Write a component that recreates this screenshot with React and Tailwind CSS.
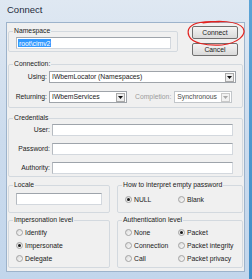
import React from 'react'

const GroupBox = ({ label, className, children }) => (
  <fieldset className={`border border-[#d3d9df] rounded-[2px] shrink-0 ${className}`}>
    <legend className="ml-[4px] px-[1px] leading-[10px] text-[#1b1b1b]">{label}</legend>
    {children}
  </fieldset>
)

const TextBox = ({ className, children }) => (
  <div className={`h-[12px] bg-white border border-[#d3d8de] border-t-[#9ea4ab] border-l-[#b5bac0] flex items-stretch ${className}`}>
    {children}
  </div>
)

const Arrow = ({ disabled }) => (
  <span className={`w-[9px] h-[9px] mr-[1px] flex items-center justify-center border ${disabled ? 'border-[#c9c9c9] bg-[#f2f2f2]' : 'border-[#a9a9a9] bg-[#ededed]'}`}>
    <svg width="5" height="3" viewBox="0 0 5 3">
      <path d="M0 0 H5 L2.5 3 Z" fill={disabled ? '#a8a8a8' : '#111'} />
    </svg>
  </span>
)

const Combo = ({ text, disabled, className }) => (
  <div className={`h-[12px] flex items-center bg-white border ${disabled ? 'border-[#c2c6ca] text-[#4a4a4a]' : 'border-[#9fa4aa] text-[#1b1b1b]'} pl-[2px] ${className}`}>
    <span className="flex-1 leading-[10px] whitespace-nowrap overflow-hidden">{text}</span>
    <Arrow disabled={disabled} />
  </div>
)

const Radio = ({ label, checked }) => (
  <div className="flex items-center gap-[2px] h-[13px] whitespace-nowrap">
    <span className="w-[7px] h-[7px] rounded-full border border-[#a3a3a3] bg-gradient-to-br from-[#dadada] to-[#fbfbfb] flex items-center justify-center">
      {checked && <span className="w-[3px] h-[3px] rounded-full bg-[#1a1a1a]" />}
    </span>
    <span className="leading-[10px]">{label}</span>
  </div>
)

const Button = ({ children, className }) => (
  <div className={`h-[13px] border border-[#707070] rounded-[2px] bg-gradient-to-b from-[#f4f4f4] to-[#dadada] text-center leading-[11px] text-[#1b1b1b] ${className}`}>
    {children}
  </div>
)

export default function App() {
  return (
    <div className="w-[252px] h-[279px] relative overflow-hidden flex font-['Liberation_Sans',Arial,sans-serif] text-[6.8px] text-[#1b1b1b]">
      <div className="w-[249px] h-[279px] flex flex-col pl-[6px] pr-[4px] bg-gradient-to-b from-[#dfe8f2] via-[#cbdbed] to-[#c2d6ec]">
        <div className="h-[22px] pl-[1px] pt-[4px] text-[9.5px] leading-[12px] text-[#1e2b3c]">Connect</div>

        <div className="h-[250px] w-[239px] bg-[#f0f0f0] border border-[#9db3cb] px-[1px] flex flex-col">
          {/* namespace + buttons */}
          <div className="h-[36px] flex items-start">
            <GroupBox label="Namespace" className="w-[170px] h-[26px] mt-[3px]">
              <TextBox className="ml-[7px] w-[155px] mt-[1px] p-[1px]">
                <span className="bg-[#3399ff] text-white leading-[9px] px-[1px]">root\cimv2</span>
              </TextBox>
            </GroupBox>
            <div className="ml-auto mr-[5px] mt-[3px] w-[46px] flex flex-col gap-[4px]">
              <Button>Connect</Button>
              <Button>Cancel</Button>
            </div>
          </div>

          {/* connection */}
          <GroupBox label="Connection:" className="w-[235px] h-[49px]">
            <div className="flex items-center mt-[2px]">
              <span className="w-[38px] text-right">Using:</span>
              <Combo text="IWbemLocator (Namespaces)" className="ml-[2px] w-[187px]" />
            </div>
            <div className="flex items-center mt-[8px]">
              <span className="w-[38px] text-right">Returning:</span>
              <Combo text="IWbemServices" className="ml-[2px] w-[78px]" />
              <span className="ml-[8px] text-[#9c9c9c]">Completion:</span>
              <Combo text="Synchronous" disabled className="ml-[3px] w-[58px]" />
            </div>
          </GroupBox>

          {/* credentials */}
          <GroupBox label="Credentials" className="w-[235px] h-[64px] mt-[5px]">
            <div className="flex items-center mt-[1px]">
              <span className="w-[41px] text-right">User:</span>
              <TextBox className="ml-[2px] w-[181px]" />
            </div>
            <div className="flex items-center mt-[7px]">
              <span className="w-[41px] text-right">Password:</span>
              <TextBox className="ml-[2px] w-[181px]" />
            </div>
            <div className="flex items-center mt-[7px]">
              <span className="w-[41px] text-right">Authority:</span>
              <TextBox className="ml-[2px] w-[181px]" />
            </div>
          </GroupBox>

          {/* locale + empty password */}
          <div className="flex mt-[3px] h-[33px]">
            <GroupBox label="Locale" className="w-[102px] h-[33px]">
              <TextBox className="ml-[7px] mt-[3px] w-[86px]" />
            </GroupBox>
            <GroupBox label="How to interpret empty password" className="w-[126px] h-[33px] ml-[7px]">
              <div className="grid grid-cols-[53px_1fr] ml-[7px] mt-[3px]">
                <Radio label="NULL" checked />
                <Radio label="Blank" />
              </div>
            </GroupBox>
          </div>

          {/* impersonation + authentication */}
          <div className="flex mt-[2px] h-[53px]">
            <GroupBox label="Impersonation level" className="w-[102px] h-[53px]">
              <div className="ml-[7px] mt-[1px] flex flex-col">
                <Radio label="Identify" />
                <Radio label="Impersonate" checked />
                <Radio label="Delegate" />
              </div>
            </GroupBox>
            <GroupBox label="Authentication level" className="w-[126px] h-[53px] ml-[7px]">
              <div className="grid grid-cols-[53px_1fr] ml-[7px] mt-[1px]">
                <Radio label="None" />
                <Radio label="Packet" checked />
                <Radio label="Connection" />
                <Radio label="Packet integrity" />
                <Radio label="Call" />
                <Radio label="Packet privacy" />
              </div>
            </GroupBox>
          </div>
        </div>
      </div>
      <div className="w-[3px] h-[279px] bg-gradient-to-b from-[#5aa3d6] to-[#3f8cc6]" />

      {/* hand drawn highlight */}
      <svg className="absolute left-0 top-0 pointer-events-none" width="252" height="279" viewBox="0 0 252 279">
        <path
          d="M203 23 C218 20 238 21 243 28 C247 35 238 43 222 45 C206 46 192 43 189 36 C186 29 191 24 200 22.5 C206 21.5 213 21.5 219 22"
          fill="none"
          stroke="#e2221f"
          strokeWidth="1.2"
          strokeLinecap="round"
        />
      </svg>
    </div>
  )
}
